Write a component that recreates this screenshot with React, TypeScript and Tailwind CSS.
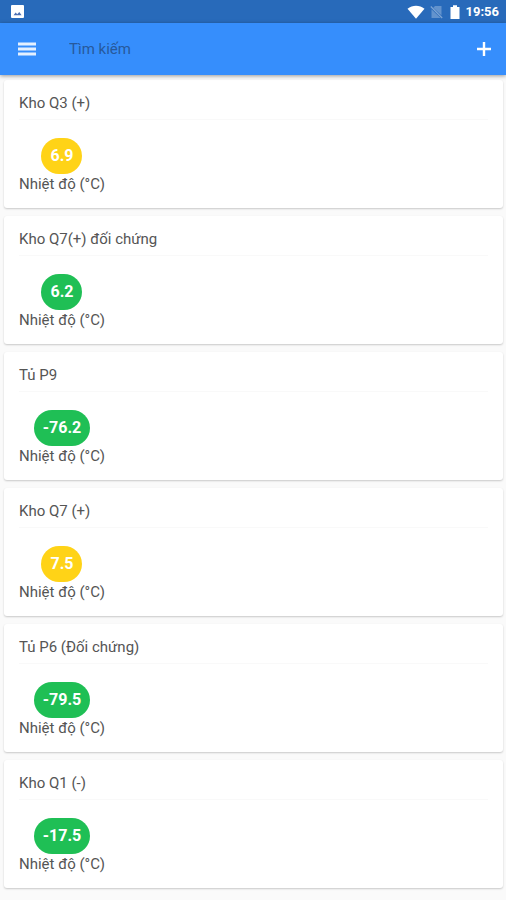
import { useState } from "react";
import clsx from "clsx";

type Level = "ok" | "warning";

type Sensor = {
  name: string;
  value: string;
  level: Level;
};

const SENSORS: Sensor[] = [
  { name: "Kho Q3 (+)", value: "6.9", level: "warning" },
  { name: "Kho Q7(+) đối chứng", value: "6.2", level: "ok" },
  { name: "Tủ P9", value: "-76.2", level: "ok" },
  { name: "Kho Q7 (+)", value: "7.5", level: "warning" },
  { name: "Tủ P6 (Đối chứng)", value: "-79.5", level: "ok" },
  { name: "Kho Q1 (-)", value: "-17.5", level: "ok" },
];

function StatusBar() {
  return (
    <div className="flex h-[23px] items-center bg-[#286aba] pr-[7px] pl-[11px] text-white">
      <svg viewBox="0 0 13 13" className="size-[13px]" aria-hidden="true">
        <rect width="13" height="13" rx="1" fill="#fff" />
        <path d="M2.5 10.200 4.700 7.600l1.500 1.600L8.300 7l2.300 3.200z" fill="#4a6fb5" />
      </svg>
      <div className="ml-auto flex items-center">
        <svg viewBox="0 0 18 14" className="h-[14px] w-[18px]" aria-hidden="true">
          <path d="M.5 3.800C5.500-.2 12.500-.2 17.500 3.800L9 13.800z" fill="#fff" />
        </svg>
        <svg viewBox="0 0 13 14" className="ml-[5px] h-[14px] w-[13px]" aria-hidden="true">
          <path d="M5 1h6.500v9.600L3.300 2.700zM1.500 4.300V13h9z" fill="#fff" opacity=".28" />
          <path d="M.8 1.500 12.200 13" stroke="#fff" strokeWidth="1.200" opacity=".4" />
        </svg>
        <svg viewBox="0 0 10 14" className="ml-[7px] h-[14px] w-[10px]" aria-hidden="true">
          <path d="M3 .3h4v1.600h2.500V14H.5V1.900H3z" fill="#fff" />
        </svg>
        <span className="ml-1.5 text-[13px] leading-4 font-bold">19:56</span>
      </div>
    </div>
  );
}

function Toolbar({ query, onQuery }: { query: string; onQuery: (value: string) => void }) {
  return (
    <div className="flex h-[52px] items-center bg-[#368efc] text-white shadow-[0_1px_4px_rgba(0,0,0,0.4)]">
      <button type="button" aria-label="Menu" className="flex h-full w-[53px] items-center justify-center">
        <svg viewBox="0 0 18 14" className="h-[14px] w-[18px]" aria-hidden="true">
          <path d="M0 2h18M0 7h18M0 12h18" stroke="#e4f0ff" strokeWidth="3" />
        </svg>
      </button>
      <input
        type="text"
        aria-label="Tìm kiếm"
        placeholder="Tìm kiếm"
        value={query}
        onChange={(e) => onQuery(e.target.value)}
        className="ml-4 h-full min-w-0 flex-1 bg-transparent text-[15px] text-[#1c426f] outline-none placeholder:text-[#27599b]"
      />
      <button type="button" aria-label="Thêm" className="flex h-full w-11 items-center justify-center">
        <svg viewBox="0 0 14 14" className="size-[14px]" aria-hidden="true">
          <path d="M7 0v14M0 7h14" stroke="#fff" strokeWidth="2.400" />
        </svg>
      </button>
    </div>
  );
}

function SensorCard({ sensor }: { sensor: Sensor }) {
  return (
    <li className="h-32 rounded-[3px] bg-white px-[15px] shadow-[0_1px_2px_rgba(0,0,0,0.2)]">
      <h2 className="h-10 border-b border-[#f9f9f9] pt-3 text-[15px] leading-[22px]">{sensor.name}</h2>
      <div className="inline-flex flex-col items-center pt-[18px]">
        <span
          className={clsx(
            "flex h-9 items-center rounded-[18px] px-[9px] text-base font-bold text-white",
            sensor.level === "ok" ? "bg-[#1fbf55]" : "bg-[#ffd317]"
          )}
        >
          {sensor.value}
        </span>
        <span className="text-[15px] leading-5">Nhiệt độ (°C)</span>
      </div>
    </li>
  );
}

export default function App() {
  const [query, setQuery] = useState("");
  const visible = SENSORS.filter((s) => s.name.toLowerCase().includes(query.trim().toLowerCase()));

  return (
    <div className="min-h-screen bg-[#fafafa] font-[Roboto,sans-serif] text-[#555555]">
      <header className="sticky top-0 z-10">
        <StatusBar />
        <Toolbar query={query} onQuery={setQuery} />
      </header>
      <main>
        <ul className="flex flex-col gap-2 pt-[5px] pr-[3px] pb-3 pl-1">
          {visible.map((sensor) => (
            <SensorCard key={sensor.name} sensor={sensor} />
          ))}
        </ul>
      </main>
    </div>
  );
}
